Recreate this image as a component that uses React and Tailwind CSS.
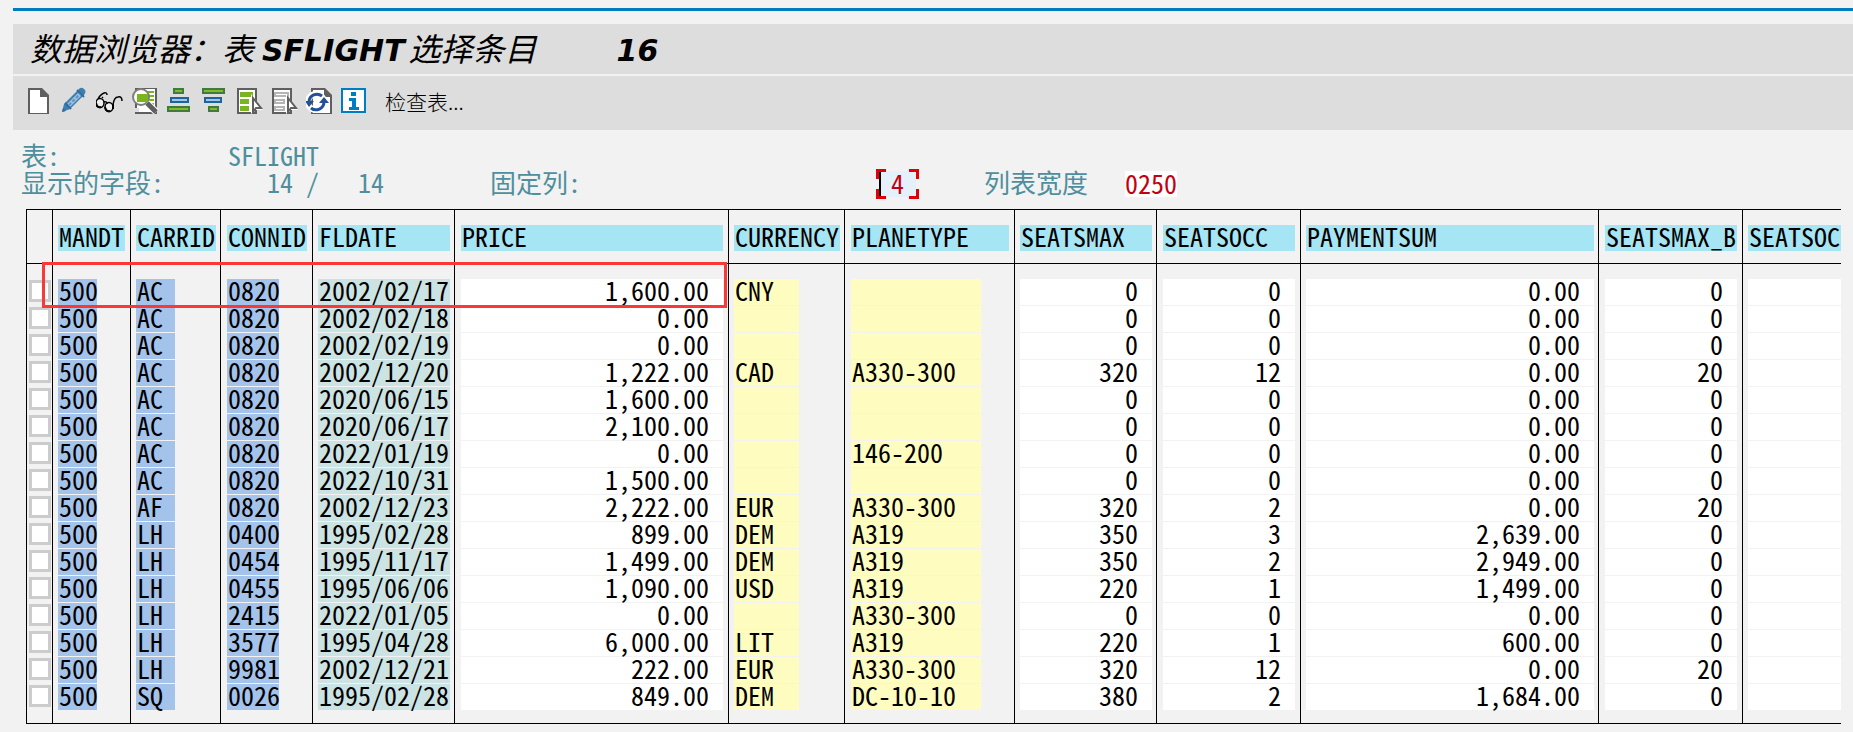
import React, { useState } from "react";

const columns = [
  { name: "MANDT", col: "w-[78px]", td: "pl-[5px]", head: "w-[67px]", cell: "w-[39px] bg-[#a3c3ea]" },
  { name: "CARRID", col: "w-[90px]", td: "pl-[5px]", head: "w-[80px]", cell: "w-[39px] bg-[#a3c3ea]" },
  { name: "CONNID", col: "w-[92px]", td: "pl-[6px]", head: "w-[80px]", cell: "w-[52px] bg-[#a3c3ea]" },
  { name: "FLDATE", col: "w-[142px]", td: "pl-[5px]", head: "w-[132px]", cell: "w-[132px] bg-[#cbe3e2]" },
  { name: "PRICE", col: "w-[274px]", td: "pl-[6px]", head: "w-[262px]", cell: "w-[262px] bg-white", right: true },
  { name: "CURRENCY", col: "w-[116px]", td: "pl-[5px]", head: "w-[106px]", cell: "w-[65px] bg-[#fffcc0]" },
  { name: "PLANETYPE", col: "w-[170px]", td: "pl-[6px]", head: "w-[158px]", cell: "w-[130px] bg-[#fffcc0]" },
  { name: "SEATSMAX", col: "w-[142px]", td: "pl-[5px]", head: "w-[132px]", cell: "w-[132px] bg-white", right: true },
  { name: "SEATSOCC", col: "w-[144px]", td: "pl-[6px]", head: "w-[132px]", cell: "w-[132px] bg-white", right: true },
  { name: "PAYMENTSUM", col: "w-[298px]", td: "pl-[5px]", head: "w-[288px]", cell: "w-[288px] bg-white", right: true },
  { name: "SEATSMAX_B", col: "w-[144px]", td: "pl-[6px]", head: "w-[132px]", cell: "w-[132px] bg-white", right: true },
  { name: "SEATSOC", col: "", td: "pl-[5px]", head: "w-full", cell: "w-full bg-white" },
];

const rows = [
  ["500", "AC", "0820", "2002/02/17", "1,600.00", "CNY", "", "0", "0", "0.00", "0", ""],
  ["500", "AC", "0820", "2002/02/18", "0.00", "", "", "0", "0", "0.00", "0", ""],
  ["500", "AC", "0820", "2002/02/19", "0.00", "", "", "0", "0", "0.00", "0", ""],
  ["500", "AC", "0820", "2002/12/20", "1,222.00", "CAD", "A330-300", "320", "12", "0.00", "20", ""],
  ["500", "AC", "0820", "2020/06/15", "1,600.00", "", "", "0", "0", "0.00", "0", ""],
  ["500", "AC", "0820", "2020/06/17", "2,100.00", "", "", "0", "0", "0.00", "0", ""],
  ["500", "AC", "0820", "2022/01/19", "0.00", "", "146-200", "0", "0", "0.00", "0", ""],
  ["500", "AC", "0820", "2022/10/31", "1,500.00", "", "", "0", "0", "0.00", "0", ""],
  ["500", "AF", "0820", "2002/12/23", "2,222.00", "EUR", "A330-300", "320", "2", "0.00", "20", ""],
  ["500", "LH", "0400", "1995/02/28", "899.00", "DEM", "A319", "350", "3", "2,639.00", "0", ""],
  ["500", "LH", "0454", "1995/11/17", "1,499.00", "DEM", "A319", "350", "2", "2,949.00", "0", ""],
  ["500", "LH", "0455", "1995/06/06", "1,090.00", "USD", "A319", "220", "1", "1,499.00", "0", ""],
  ["500", "LH", "2415", "2022/01/05", "0.00", "", "A330-300", "0", "0", "0.00", "0", ""],
  ["500", "LH", "3577", "1995/04/28", "6,000.00", "LIT", "A319", "220", "1", "600.00", "0", ""],
  ["500", "LH", "9981", "2002/12/21", "222.00", "EUR", "A330-300", "320", "12", "0.00", "20", ""],
  ["500", "SQ", "0026", "1995/02/28", "849.00", "DEM", "DC-10-10", "380", "2", "1,684.00", "0", ""],
];

const Icon = ({ children, viewBox = "0 0 28 28" }) => (
  <svg width="28" height="28" viewBox={viewBox} className="block">
    {children}
  </svg>
);

const NewIcon = () => (
  <Icon>
    <path d="M2 2h14l7 7v20H2z" fill="#5f5f5f" />
    <path d="M4 4h10v7h7v16H4z" fill="#fff" />
  </Icon>
);

const EditIcon = () => (
  <Icon>
    <path d="M1 26l2-8L17 4q3-4 6-1q3 2 0 6L9 23z" fill="#3f7fb0" />
    <path d="M6 18L17 7l3 3L9 21z" fill="#9cc0e0" />
    <path d="M16 4l7 7M4 17l6 6" stroke="#2d6d9f" strokeWidth="2" />
    <path d="M8 19l11-11" stroke="#5e93bf" strokeWidth="2" strokeDasharray="3 2" />
    <path d="M1 26l1-4 3 3z" fill="#2d6d9f" />
  </Icon>
);

const GlassesIcon = () => (
  <Icon viewBox="1 0 28 28">
    <g fill="none" stroke="#000" strokeWidth="1.500">
      <path d="M12 9q0-3-3-2q-5 2-7 9M8 12l-1-1" />
      <ellipse cx="5" cy="17" rx="4" ry="4.500" fill="#eee" />
      <ellipse cx="14" cy="21" rx="4" ry="4.500" fill="#eee" />
      <path d="M9 16q3-1 3 2M18 19q1-8 5-8q4-1 4 4" />
    </g>
    <path d="M1 17q1 5 5 4M10 21q1 5 5 4M18 18v5" stroke="#000" strokeWidth="2" fill="none" />
  </Icon>
);

const DetailIcon = () => (
  <Icon>
    <path d="M4 2h22v26H4z" fill="#5f5f5f" />
    <path d="M6 3h18v23H6z" fill="#fff" />
    <path d="M4 22h4v4H4z" fill="#ddd" />
    <path d="M17 6h6M17 10h6M17 14h6M18 18h5" stroke="#7ab51d" strokeWidth="2" />
    <circle cx="10" cy="11" r="8" fill="#fff" stroke="#7e7e7e" strokeWidth="2" />
    <path d="M6 8h11v8H6z" fill="#7ab51d" />
    <path d="M16 17l9 9" stroke="#fff" strokeWidth="7" />
    <path d="M16 17l9 9" stroke="#5f5f5f" strokeWidth="5" />
  </Icon>
);

const SortAscIcon = () => (
  <Icon>
    <path d="M8 3h9v4H8z" fill="#84b92c" stroke="#3f7a3f" strokeWidth="2" />
    <path d="M5 12h17v4H5z" fill="#a3c6e6" stroke="#1b649c" strokeWidth="2" />
    <path d="M2 21h21v4H2z" fill="#84b92c" stroke="#3f7a3f" strokeWidth="2" />
  </Icon>
);

const SortDescIcon = () => (
  <Icon>
    <path d="M2 3h21v4H2z" fill="#84b92c" stroke="#3f7a3f" strokeWidth="2" />
    <path d="M4 12h16v4H4z" fill="#a3c6e6" stroke="#1b649c" strokeWidth="2" />
    <path d="M8 21h9v4H8z" fill="#84b92c" stroke="#3f7a3f" strokeWidth="2" />
  </Icon>
);

const SelectIcon = ({ all }) => (
  <Icon viewBox="1 0 28 28">
    <path d="M2 2h20v27H2z" fill="#5f5f5f" />
    <path d="M4 4h16v22H4z" fill="#fff" />
    {all ? (
      <path d="M5 6h13v5H5zM5 13h9v5H5zM5 20h9v5H5z" fill="#7ab51d" />
    ) : (
      <path d="M5 7h13v3H5zM5 14h9v3H5zM5 21h9v3H5z" fill="#fff" stroke="#b5b5b5" strokeWidth="2" />
    )}
    <path d="M16 8v20l4-4h8z" fill="#fff" />
    <path d="M18 12v14l3-4h5z" fill="#fff" stroke="#5f5f5f" strokeWidth="2" />
  </Icon>
);

const RefreshIcon = () => (
  <Icon viewBox="2 0 28 28">
    <path d="M8 2h13l7 7v20H7V2z" fill="#5f5f5f" />
    <path d="M9 4h11v7h6v16H9z" fill="#fff" />
    <circle cx="12" cy="16" r="8" fill="none" stroke="#fff" strokeWidth="6" />
    <g fill="none" stroke="#24509a" strokeWidth="3">
      <path d="M5 16a8 8 0 0 1 13-6" />
      <path d="M20 16a8 8 0 0 1-13 6" />
    </g>
    <path d="M1 15h9l-5 6zM15 17h10l-5-6z" fill="#24509a" />
  </Icon>
);

const InfoIcon = () => (
  <Icon viewBox="3 0 28 28">
    <path d="M3 2h25v25H3z" fill="#007cc0" />
    <path d="M5 4h21v21H5z" fill="#fff" />
    <path d="M13 6h5v4h-5zM11 12h7v9h3v3H11v-3h3v-6h-3z" fill="#007cc0" />
  </Icon>
);

const tools = [
  { label: "新建", icon: <NewIcon /> },
  { label: "更改", icon: <EditIcon /> },
  { label: "显示", icon: <GlassesIcon /> },
  { label: "明细", icon: <DetailIcon /> },
  { label: "升序排序", icon: <SortAscIcon /> },
  { label: "降序排序", icon: <SortDescIcon /> },
  { label: "全选", icon: <SelectIcon all /> },
  { label: "取消全选", icon: <SelectIcon /> },
  { label: "刷新", icon: <RefreshIcon /> },
  { label: "信息", icon: <InfoIcon /> },
];

const Header = () => (
  <header className="ml-[13px] border-t-3 border-[#007cc0]">
    <div className="mt-[13px] h-[50px] bg-[#dddddd] pl-[17px]">
      <h1 className="flex items-baseline whitespace-pre text-[32px] leading-[46px] font-normal italic">
        <span>数据浏览器：表</span>
        <b className="ml-2 font-['DejaVu_Sans'] text-[30px] font-bold">SFLIGHT</b>
        <span className="ml-1">选择条目</span>
        <b className="ml-20 font-['DejaVu_Sans'] text-[30px] font-bold">16</b>
      </h1>
    </div>
    <div className="mt-[2px] flex h-[54px] items-start bg-[#dddddd] pt-[10px] pl-[13px]">
      <div className="flex gap-[7px]">
        {tools.map((tool) => (
          <button key={tool.label} type="button" aria-label={tool.label}>
            {tool.icon}
          </button>
        ))}
      </div>
      <button type="button" className="ml-4 text-[21px] leading-[30px] font-light">
        检查表...
      </button>
    </div>
  </header>
);

const Summary = () => {
  let [fixed, setFixed] = useState("4");
  let [width, setWidth] = useState("0250");

  return (
    <div className="pt-[14px] pl-[20px] whitespace-pre text-[26px] leading-[22px] text-[#4f8f9d]">
      <div className="flex h-[27px]">
        <span className="w-[208px] pl-px">表:</span>
        <span>SFLIGHT</span>
      </div>
      <div className="flex h-[26px]">
        <span className="w-[208px] pl-px">显示的字段:</span>
        <span className="w-[262px]">{"   14 /   14"}</span>
        <label htmlFor="fixed" className="w-[386px]">
          固定列:
        </label>
        <div className="relative w-[43px] px-[3px]">
          <input
            id="fixed"
            value={fixed}
            onChange={(e) => setFixed(e.target.value)}
            className="block h-[26px] w-full border-l-2 border-black bg-[#e4f1fb] pb-[4px] pl-[10px] leading-[22px] text-[#c40010] outline-none"
          />
          <svg
            viewBox="0 0 43 30"
            className="pointer-events-none absolute -top-[2px] left-0 h-[30px] w-[43px]"
            fill="none"
            stroke="#e00008"
            strokeWidth="3"
          >
            <path d="M10 1.500H1.500V10M33 1.500h8.500V10M1.500 20v8.500H10M41.500 20v8.500H33" />
          </svg>
        </div>
        <label htmlFor="width" className="ml-[65px] w-[141px]">
          列表宽度
        </label>
        <input
          id="width"
          value={width}
          onChange={(e) => setWidth(e.target.value)}
          className="block h-[26px] w-[52px] bg-white pb-[4px] leading-[22px] text-[#c40010] outline-none"
        />
      </div>
    </div>
  );
};

const Row = ({ row, first, last }) => {
  let pad = first ? "border-t pt-[15px] pb-px" : last ? "border-b pb-[13px]" : "pb-px";

  return (
    <tr>
      <td className={`border-l border-black pl-[2px] align-top ${pad}`}>
        <input
          type="checkbox"
          aria-label={`${row[1]} ${row[2]} ${row[3]}`}
          className="mt-px mb-[3px] block size-[22px] appearance-none border-3 border-[#cccccc] bg-white checked:bg-[#007cc0]"
        />
      </td>
      {columns.map((column, i) => (
        <td key={column.name} className={`border-l border-black ${column.td} ${pad}`}>
          <div className={`h-[26px] px-px ${column.cell} ${column.right ? "pr-[14px] text-right" : ""}`}>
            {row[i]}
          </div>
        </td>
      ))}
    </tr>
  );
};

const FlightTable = () => (
  <div className="relative mt-[12px] mr-[12px] ml-[26px]">
    <table className="w-full min-w-[1800px] table-fixed border-separate border-spacing-0 text-[26px] leading-[22px] whitespace-nowrap text-black">
      <colgroup>
        <col className="w-[26px]" />
        {columns.map((column) => (
          <col key={column.name} className={column.col} />
        ))}
      </colgroup>
      <thead>
        <tr>
          <td className="border-t border-l border-black" />
          {columns.map((column) => (
            <th
              key={column.name}
              className={`border-t border-l border-black pt-[15px] pb-[12px] text-left font-normal ${column.td}`}
            >
              <div className={`h-[26px] bg-[#a5e5f4] px-px ${column.head}`}>{column.name}</div>
            </th>
          ))}
        </tr>
      </thead>
      <tbody>
        {rows.map((row, i) => (
          <Row key={i} row={row} first={i === 0} last={i === rows.length - 1} />
        ))}
      </tbody>
    </table>
    {/* marks the first entry */}
    <div className="pointer-events-none absolute top-[53px] left-[16px] h-[46px] w-[685px] border-3 border-[#fb3838]" />
  </div>
);

const App = () => {
  return (
    <div className="min-h-screen overflow-hidden bg-[#f2f2f2] pt-2 pb-2 font-['Noto_Sans_CJK_SC',sans-serif] text-black">
      <Header />
      <main className="[font-family:'Noto_Sans_Mono_CJK_SC','Noto_Sans_CJK_SC',monospace] [font-feature-settings:'hwid']">
        <Summary />
        <FlightTable />
      </main>
    </div>
  );
};

export default App;
